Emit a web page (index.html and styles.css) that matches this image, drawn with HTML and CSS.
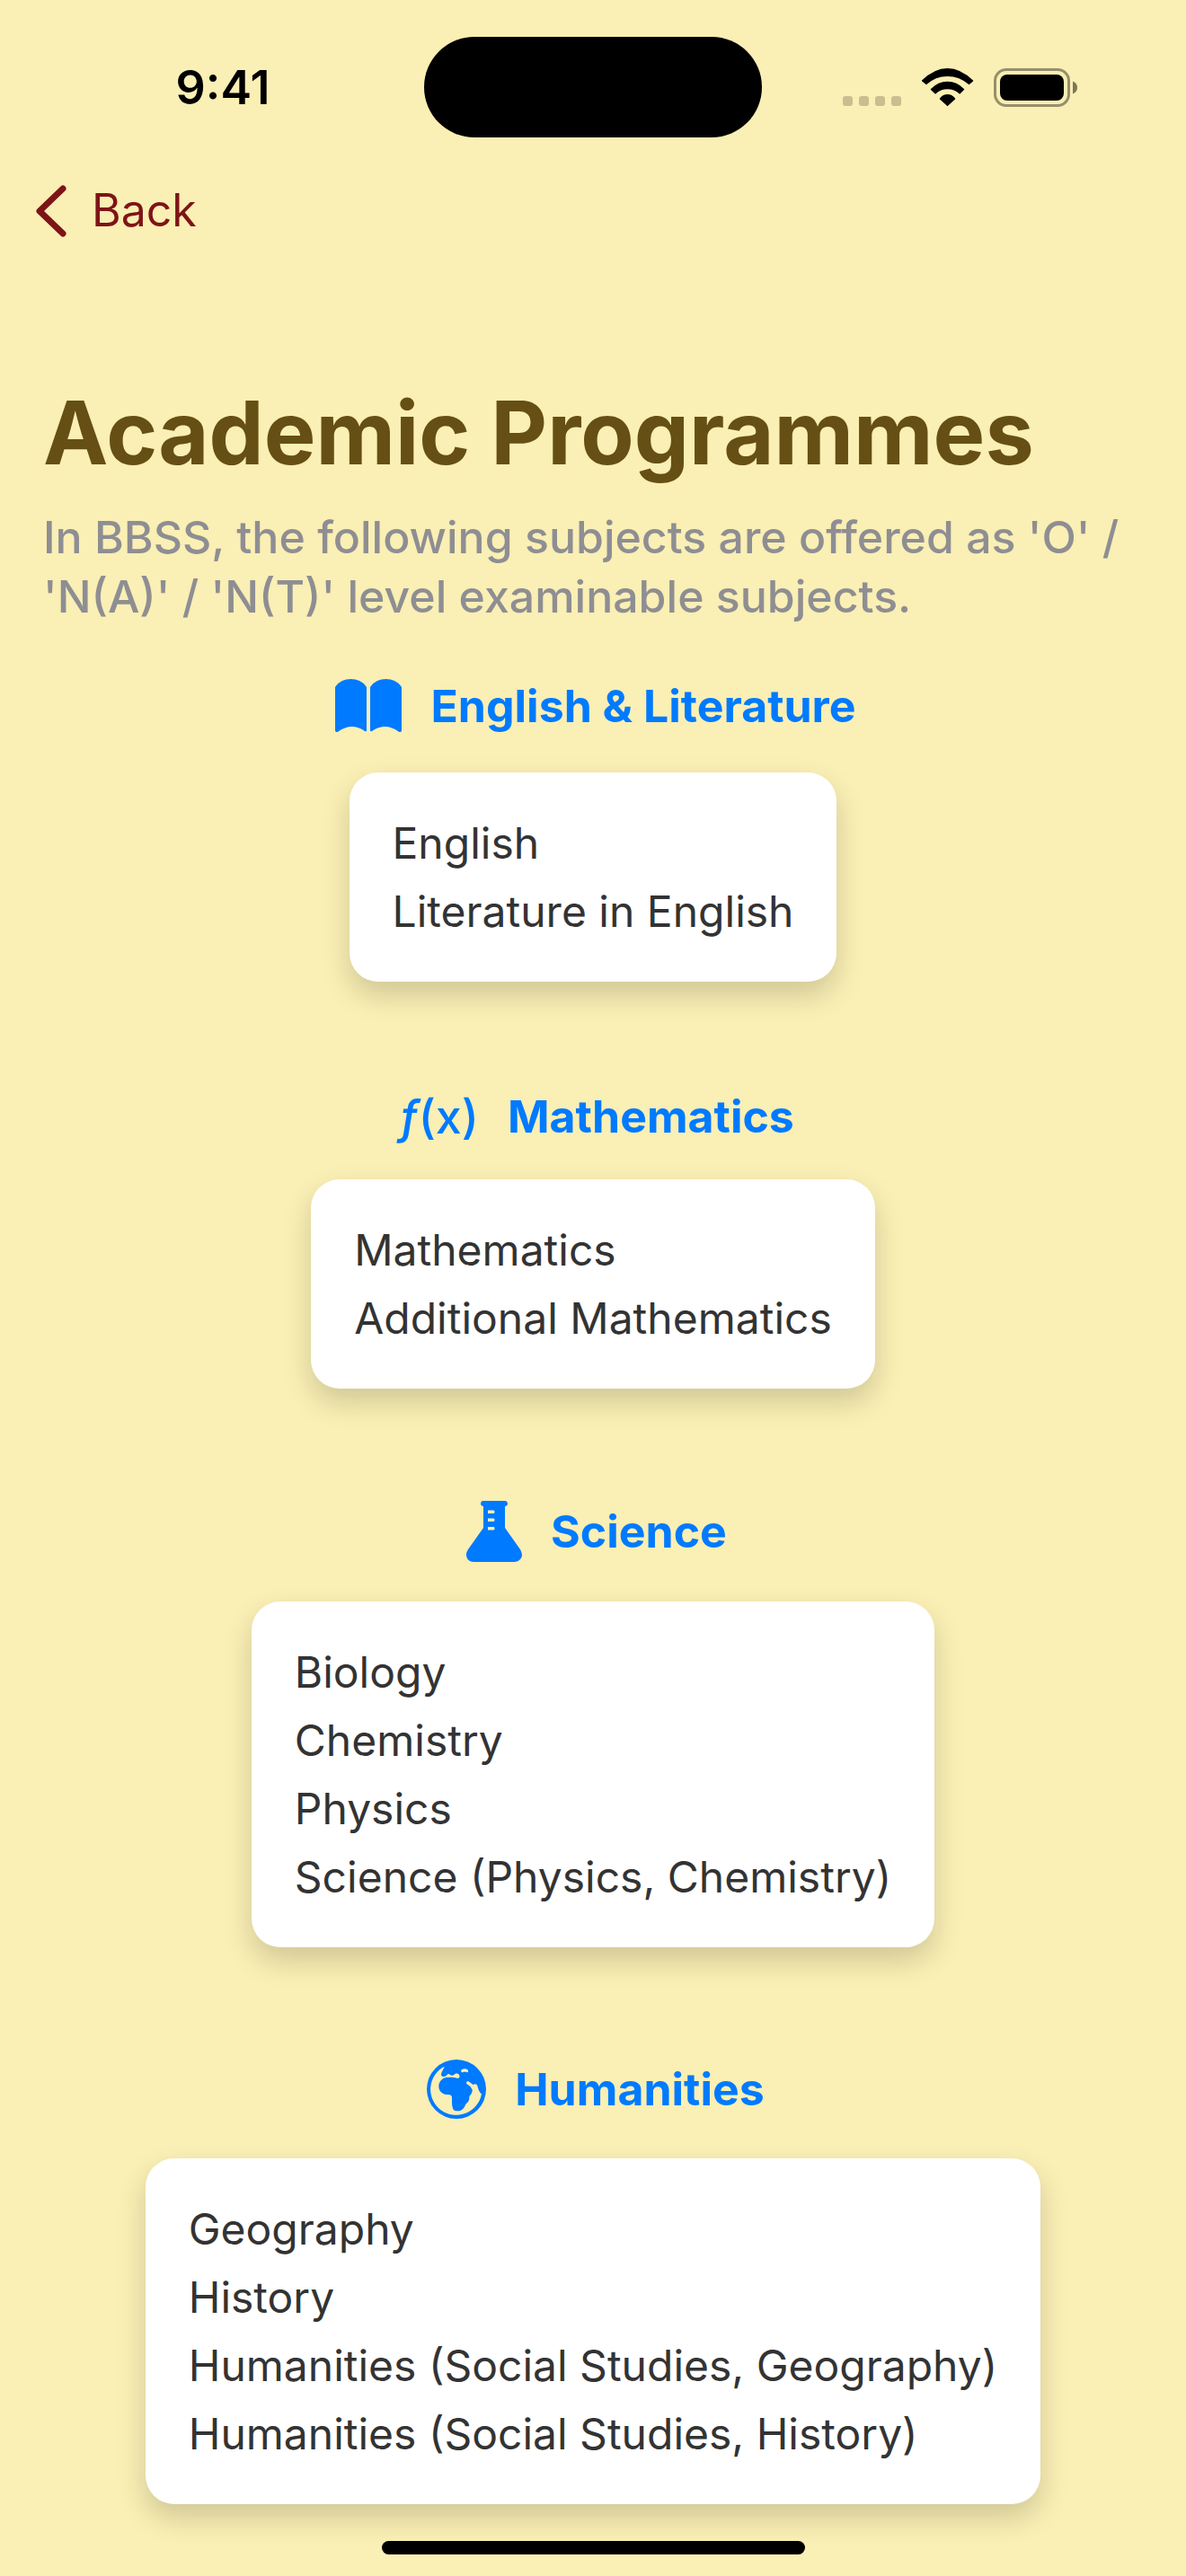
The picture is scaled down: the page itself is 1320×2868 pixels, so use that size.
FILE: index.html
```html
<!DOCTYPE html>
<html lang="en">
<head>
<meta charset="utf-8">
<meta name="viewport" content="width=device-width, initial-scale=1">
<title>Academic Programmes</title>
<link rel="stylesheet" href="styles.css">
</head>
<body>
<header class="status-bar">
  <div class="status-side status-left"><time class="clock">9:41</time></div>
  <div class="island"></div>
  <div class="status-side status-right">
    <svg width="264" height="48" viewBox="936 72 264 48" aria-hidden="true">
      <g fill="#000" fill-opacity=".2">
        <rect x="937" y="106" width="11" height="11" rx="3"/>
        <rect x="955" y="106" width="11" height="11" rx="3"/>
        <rect x="973" y="106" width="11" height="11" rx="3"/>
        <rect x="991" y="106" width="11" height="11" rx="3"/>
      </g>
      <path d="M1025 88.500Q1039 75 1053.500 75T1082 88.500Q1082.500 89 1082 89.500L1077.500 93.300Q1067 84 1053.500 84T1030 93.300L1025.200 89.500Q1024.500 89 1025 88.500Z"/>
      <path d="M1035 98Q1043 89.700 1053.500 89.700T1072 98Q1072.500 98.500 1072 99L1067.200 103.700Q1061 98.300 1053.500 98.300T1040 103.700L1035 99Q1034.500 98.500 1035 98Z"/>
      <path d="M1045 108.300Q1048.500 104 1053.500 104T1062 108.300Q1062.500 109 1062 109.500L1053.500 117.300L1045 109.500Q1044.500 109 1045 108.300Z"/>
      <rect x="1106.500" y="76.500" width="82" height="40" rx="12.500" fill="none" stroke="#000" stroke-opacity=".4" stroke-width="3"/>
      <rect x="1112" y="82" width="71" height="29" rx="8"/>
      <path d="M1193 89.500Q1198 91.500 1198 96.500T1193 103.500Z" fill-opacity=".5"/>
    </svg>
  </div>
</header>
<nav class="nav-bar">
  <a class="back" href="#">
    <svg width="34" height="58" viewBox="0 0 34 58" aria-hidden="true"><path d="M30 4L4 29L30 54" fill="none" stroke="currentColor" stroke-width="7" stroke-linecap="round" stroke-linejoin="round"/></svg>
    <span>Back</span>
  </a>
</nav>
<main class="content">
  <h1 class="title">Academic Programmes</h1>
  <p class="intro">In BBSS, the following subjects are offered as 'O' / 'N(A)' / 'N(T)' level examinable subjects.</p>
  <div class="groups">
    <section class="group">
      <h2 class="group-title">
        <svg width="80" height="70" viewBox="365 752 80 70" fill="currentColor" aria-hidden="true">
          <path d="M371 768V766Q377 757 388.500 757T406 766V814Q406 816 404 815Q397 810 389.500 810T374.500 815.500Q371 817 371 814Z"/>
          <path d="M410 766Q416 757 427.500 757T445 766V814Q445 817 441.500 815.500Q434 810 426.500 810T412 815Q410 816 410 814Z"/>
        </svg>
        <span>English &amp; Literature</span>
      </h2>
      <ul class="card"><li>English</li><li>Literature in English</li></ul>
    </section>
    <section class="group">
      <h2 class="group-title">
        <span class="fx" aria-hidden="true"><i>ƒ</i>(x)</span>
        <span>Mathematics</span>
      </h2>
      <ul class="card"><li>Mathematics</li><li>Additional Mathematics</li></ul>
    </section>
    <section class="group">
      <h2 class="group-title">
        <svg width="70" height="78" viewBox="512 1666 70 78" fill="currentColor" aria-hidden="true">
          <path fill-rule="evenodd" d="M538 1671H563.500Q566 1671.500 566 1674T563 1677V1701L580 1725Q584 1732 580 1736Q577.500 1739 573 1739H528.500Q524 1739 521.500 1736Q518 1731 522 1725L539 1701V1677Q536 1676.500 536 1674T538 1671ZM544 1681.500V1685H550.500Q551.500 1685 551.500 1683.300T550.500 1681.500ZM544 1690.500V1694H550.500Q551.500 1694 551.500 1692.300T550.500 1690.500ZM544 1700V1703.500H550.500Q551.500 1703.500 551.500 1701.700T550.500 1700Z"/>
        </svg>
        <span>Science</span>
      </h2>
      <ul class="card"><li>Biology</li><li>Chemistry</li><li>Physics</li><li>Science (Physics, Chemistry)</li></ul>
    </section>
    <section class="group">
      <h2 class="group-title">
        <svg width="72" height="76" viewBox="0 6 216 228" fill="currentColor" aria-hidden="true">
          <path fill-rule="evenodd" d="M117 21A99 99 0 1 1 117 219A99 99 0 1 1 117 21Z
            M77 44C74 55 66 62 66 72C67 79 78 80 83 75C88 68 92 66 96 73C101 75 106 75 110 71C114 66 124 66 127 74C129 81 125 85 119 83C108 79 98 80 88 80C72 81 60 91 58 107C57 124 66 134 82 138C92 139 101 137 102 147C102 165 101 177 107 188C112 194 123 194 131 191C140 187 145 178 148 170C156 164 160 159 160 148C159 141 171 136 170 122L164 112L152 103C148 98 151 92 157 94L173 105C179 101 185 102 187 109C190 118 192 130 201 136A86 86 0 1 1 77 44Z
            M132 58C136 50 151 50 156 57V64C152 64 150 62 145 62C140 62 137 65 134 63Z"/>
        </svg>
        <span>Humanities</span>
      </h2>
      <ul class="card"><li>Geography</li><li>History</li><li>Humanities (Social Studies, Geography)</li><li>Humanities (Social Studies, History)</li></ul>
    </section>
  </div>
</main>
<footer class="home"><div class="home-indicator"></div></footer>
</body>
</html>
```

FILE: styles.css
```css
* { box-sizing: border-box; }
body {
  margin: 0;
  background: #faefb4;
  color: #333;
  font: 400 48px/61px Inter, "Liberation Sans", sans-serif;
}
svg { display: block; flex: none; }
.status-bar {
  display: grid;
  grid-template-columns: 1fr auto 1fr;
  align-items: center;
  padding-top: 41px;
  color: #000;
}
.status-side { display: flex; justify-content: center; }
.status-left { padding-left: 24px; }
.status-right { padding-right: 30px; }
.clock { font-size: 52px; font-weight: 600; }
.island { width: 376px; height: 112px; border-radius: 56px; background: #000; }
.nav-bar { padding: 51px 40px 0; }
.back {
  display: flex;
  align-items: center;
  gap: 28px;
  width: fit-content;
  color: #7d1418;
  font-size: 50px;
  text-decoration: none;
}
.content { padding: 156px 48px 0; }
.title { margin: 0; font-size: 97px; line-height: 122px; font-weight: 700; color: #664f14; }
.intro { margin: 22px 0 0; font-size: 50px; line-height: 66px; font-weight: 500; color: #8e8e93; }
.groups { display: flex; flex-direction: column; gap: 120px; margin-top: 54px; }
.group { display: flex; flex-direction: column; align-items: center; gap: 39px; }
.group-title {
  display: flex;
  align-items: center;
  gap: 32px;
  margin: 0;
  font-size: 50px;
  font-weight: 700;
  color: #007aff;
}
.fx { padding-left: 8px; font-size: 52px; font-weight: 500; }
.card {
  display: flex;
  flex-direction: column;
  gap: 15px;
  margin: 0;
  padding: 48px;
  list-style: none;
  background: #fff;
  border-radius: 32px;
  box-shadow: 0 15px 32px rgba(0, 0, 0, .17);
}
.home { display: flex; justify-content: center; padding: 41px 0 24px; }
.home-indicator { width: 471px; height: 15px; border-radius: 8px; background: #000; }
```
